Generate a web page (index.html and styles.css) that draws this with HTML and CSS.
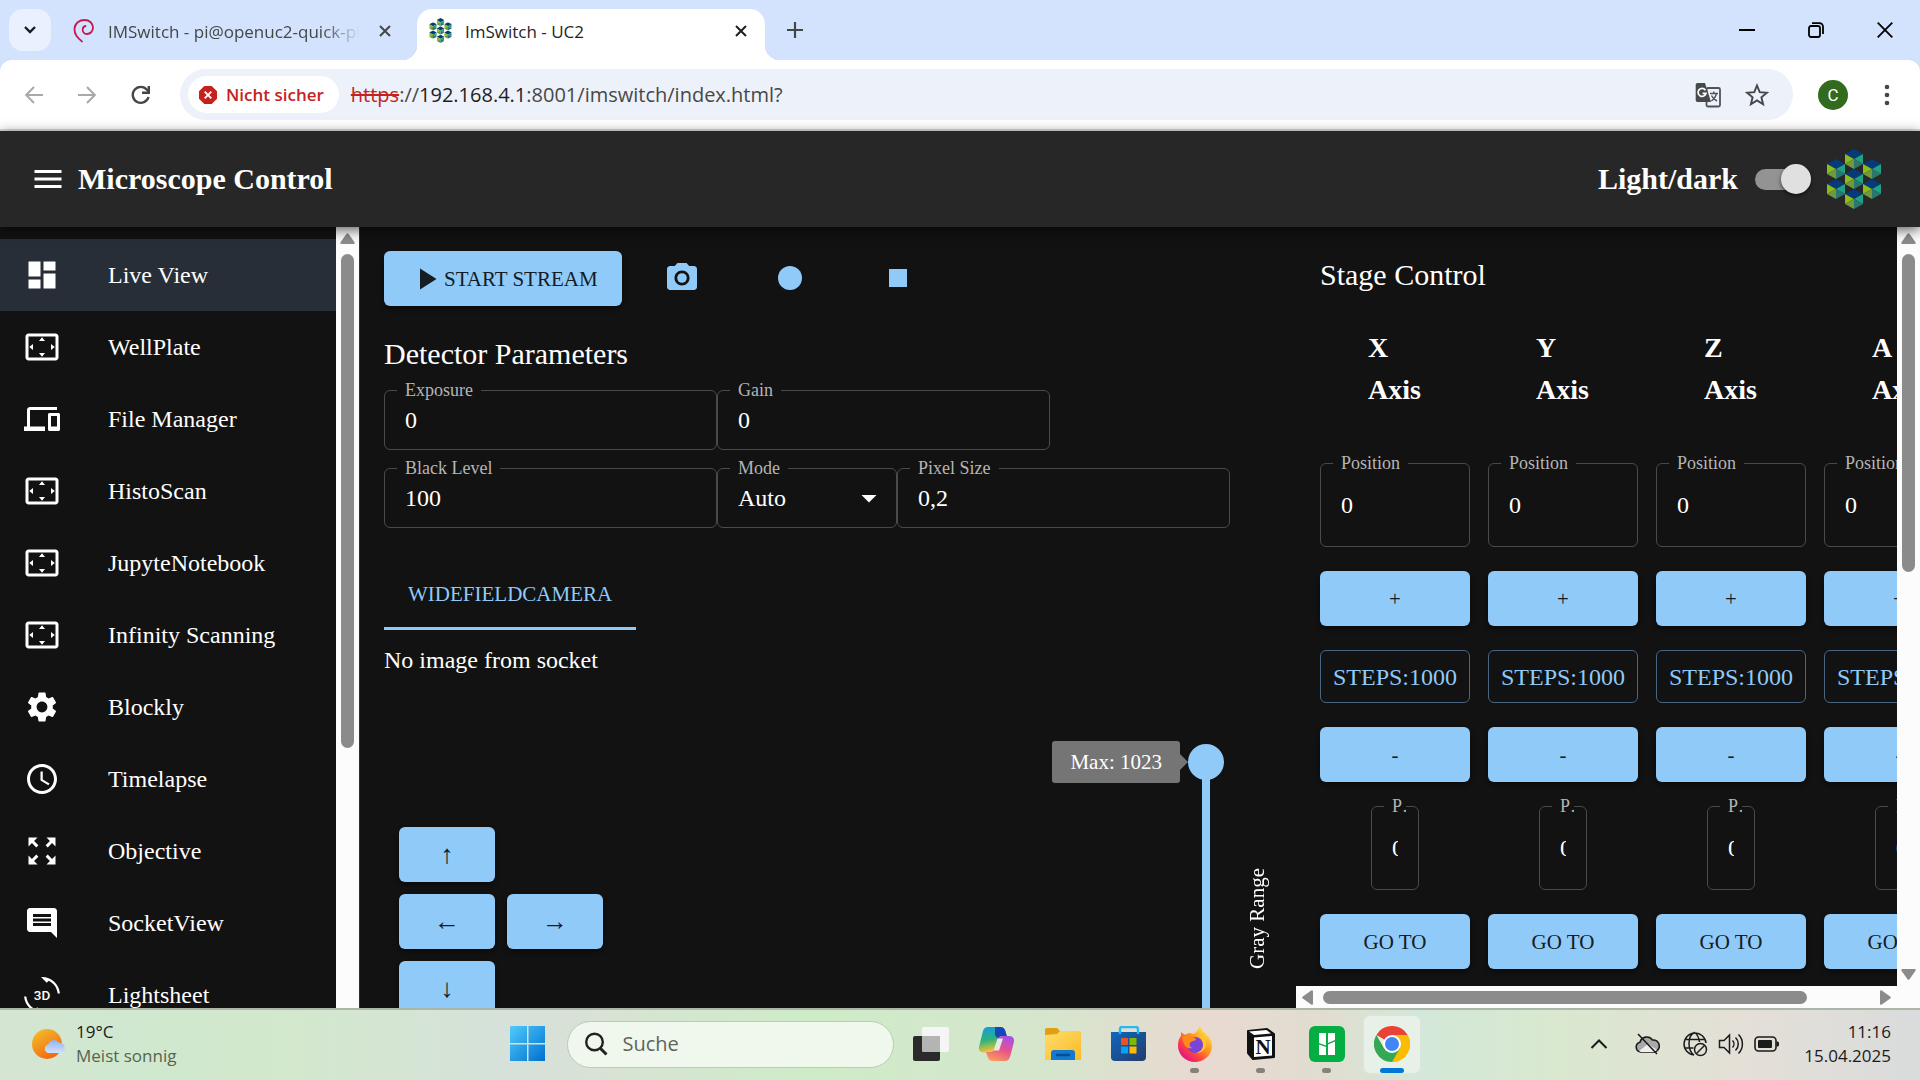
FILE: index.html
```html
<!DOCTYPE html>
<html lang="de">
<head>
<meta charset="utf-8">
<title>ImSwitch - UC2</title>
<link rel="stylesheet" href="styles.css">
</head>
<body>
<svg class="defs" aria-hidden="true">
  <defs>
    <symbol id="cube" viewBox="0 0 18 20">
      <path fill="#063a78" d="M9 0l9 5-9 5-9-5z"/>
      <path fill="#8cbb1c" d="M0 5l9 5-9 5z"/>
      <path fill="#70993f" d="M9 10v10l-9-5z"/>
      <path fill="#20a085" d="M18 5v10l-9-5z"/>
      <path fill="#2a776d" d="M9 10l9 5-9 5z"/>
    </symbol>
    <symbol id="uc2" viewBox="0 0 54 60">
      <use href="#cube" x="18" y="0" width="18" height="20"/>
      <use href="#cube" x="0" y="10" width="18" height="20"/>
      <use href="#cube" x="36" y="10" width="18" height="20"/>
      <use href="#cube" x="18" y="20" width="18" height="20"/>
      <use href="#cube" x="0" y="30" width="18" height="20"/>
      <use href="#cube" x="36" y="30" width="18" height="20"/>
      <use href="#cube" x="18" y="40" width="18" height="20"/>
    </symbol>
    <symbol id="overscan" viewBox="0 0 24 24">
      <path d="M12.01 5.5L10 8h4l-1.99-2.5zM18 10v4l2.5-1.99L18 10zM6 10l-2.5 2.01L6 14v-4zm8 6h-4l2.01 2.5L14 16zm7-13H3c-1.1 0-2 .9-2 2v14c0 1.1.9 2 2 2h18c1.1 0 2-.9 2-2V5c0-1.1-.9-2-2-2zm0 16.01H3V4.99h18v14.02z"/>
    </symbol>
    <symbol id="cross" viewBox="0 0 12 12">
      <path d="M1 1l10 10M11 1L1 11" fill="none" stroke="currentColor" stroke-width="2"/>
    </symbol>
    <symbol id="arrow" viewBox="0 0 15 11">
      <path d="M6.500 .8q1-1.200 2 0l6 8.400q.8 1.600-1 1.800h-12q-1.800-.2-1-1.800z" fill="#8b8b8b"/>
    </symbol>
  </defs>
</svg>

<header class="browser">
  <div class="tabstrip">
    <button class="tab-search" aria-label="Tabs durchsuchen"><svg width="12" height="8" viewBox="0 0 12 8"><path d="M1 1l5 5 5-5" fill="none" stroke="#1b1b1b" stroke-width="2.400"/></svg></button>
    <div class="tab">
      <svg width="22" height="24" viewBox="0 0 22 24"><path d="M9.500 23C5 19 1 15.500 1.500 9.500 2 4 6.500 1 11.500 1c5 0 8.500 3.500 8.500 7.500s-2.800 6.500-6 6.500-4.500-2.500-4.300-4.700c.2-2 1.600-3.300 3.500-3.300" fill="none" stroke="#c4194f" stroke-width="1.800"/></svg>
      <span class="tab-title faded">IMSwitch - pi@openuc2-quick-pi</span>
      <button class="icon-btn" aria-label="Tab schließen"><svg width="12" height="12"><use href="#cross"/></svg></button>
    </div>
    <div class="tab active">
      <svg width="23" height="25"><use href="#uc2"/></svg>
      <span class="tab-title">ImSwitch - UC2</span>
      <button class="icon-btn" aria-label="Tab schließen"><svg width="12" height="12"><use href="#cross"/></svg></button>
    </div>
    <button class="icon-btn new-tab" aria-label="Neuer Tab"><svg width="16" height="16" viewBox="0 0 16 16"><path d="M8 0v16M0 8h16" stroke="#444746" stroke-width="2.200"/></svg></button>
    <div class="window-controls">
      <button class="icon-btn" aria-label="Minimieren"><svg width="16" height="16" viewBox="0 0 16 16"><path d="M0 8h16" stroke="#000" stroke-width="2"/></svg></button>
      <button class="icon-btn" aria-label="Verkleinern"><svg width="16" height="16" viewBox="0 0 16 16" fill="none" stroke="#000" stroke-width="1.800"><rect x="1" y="4" width="11" height="11" rx="2"/><path d="M4 1.200h7.500a3.500 3.500 0 0 1 3.500 3.500v7.300"/></svg></button>
      <button class="icon-btn" aria-label="Schließen"><svg width="16" height="16" viewBox="0 0 16 16"><path d="M.7.7l14.600 14.600M15.300.7L.7 15.300" stroke="#000" stroke-width="1.800"/></svg></button>
    </div>
  </div>
  <div class="toolbar">
    <button class="icon-btn" aria-label="Zurück"><svg width="18" height="18" viewBox="0 0 18 18" fill="none" stroke="#a9a9a9" stroke-width="2"><path d="M18 9H1.500M9 1L1.200 9 9 17"/></svg></button>
    <button class="icon-btn" aria-label="Vorwärts"><svg width="18" height="18" viewBox="0 0 18 18" fill="none" stroke="#a9a9a9" stroke-width="2"><path d="M0 9h16.500M9 1l7.800 8L9 17"/></svg></button>
    <button class="icon-btn" aria-label="Neu laden"><svg width="20" height="20" viewBox="0 0 20 20"><path d="M17.500 12A8 8 0 1 1 16 4.800L18 7" fill="none" stroke="#444746" stroke-width="2.400"/><path d="M19 1v8h-8V6.600h5.600V1z" fill="#444746"/></svg></button>
    <div class="address">
      <button class="chip"><svg width="18" height="18" viewBox="0 0 18 18"><path d="M5.300 0h7.400L18 5.300v7.400L12.700 18H5.300L0 12.700V5.300z" fill="#c5221f"/><path d="M5.700 5.700l6.600 6.600M12.300 5.700l-6.600 6.600" stroke="#fff" stroke-width="1.800"/></svg>Nicht sicher</button>
      <div class="url"><s>https</s>://<b>192.168.4.1</b>:8001/imswitch/index.html?</div>
      <button class="icon-btn" aria-label="Übersetzen"><svg width="26" height="26" viewBox="0 0 26 26"><rect x="11.500" y="6" width="13.500" height="18.500" rx="1.500" fill="none" stroke="#525355" stroke-width="1.800"/><path d="M2.500 1H10l6 19H2.500A1.800 1.800 0 0 1 .7 18.200V2.800A1.800 1.800 0 0 1 2.500 1z" fill="#47494b"/><path d="M10.500 8.300A4 4 0 1 0 11 11.300H7.500" fill="none" stroke="#fff" stroke-width="1.700"/><path d="M15 11.500h8M18.800 9.500v2M21.500 11.500c-.8 3.500-3 6-5.200 7.500M16.500 13.500c1 2.300 3.200 4.400 5.500 5.500" fill="none" stroke="#525355" stroke-width="1.400"/></svg></button>
      <button class="icon-btn" aria-label="Lesezeichen"><svg width="24" height="24" viewBox="0 0 24 24"><path d="M12 2.500l2.700 6.700 7.200.5-5.500 4.600 1.700 7L12 17.400l-6.100 3.900 1.700-7L2.100 9.700l7.200-.5z" fill="none" stroke="#444746" stroke-width="1.900"/></svg></button>
    </div>
    <button class="avatar">C</button>
    <button class="icon-btn" aria-label="Menü"><svg width="6" height="22" viewBox="0 0 6 22" fill="#444746"><circle cx="3" cy="3" r="2.300"/><circle cx="3" cy="11" r="2.300"/><circle cx="3" cy="19" r="2.300"/></svg></button>
  </div>
</header>

<div class="appbar">
  <button class="icon-btn" aria-label="Open menu"><svg width="36" height="36" viewBox="0 0 24 24" fill="#fff"><path d="M3 18h18v-2H3v2zm0-5h18v-2H3v2zm0-7v2h18V6H3z"/></svg></button>
  <h1>Microscope Control</h1>
  <label for="theme">Light/dark</label>
  <input type="checkbox" id="theme" class="switch" checked>
  <svg width="54" height="60"><use href="#uc2"/></svg>
</div>

<div class="content">
  <nav class="sidebar">
    <ul>
      <li><a href="#live" class="selected"><svg viewBox="0 0 24 24"><path d="M3 13h8V3H3v10zm0 8h8v-6H3v6zm10 0h8V11h-8v10zm0-18v6h8V3h-8z"/></svg>Live View</a></li>
      <li><a href="#wellplate"><svg><use href="#overscan"/></svg>WellPlate</a></li>
      <li><a href="#files"><svg viewBox="0 0 24 24"><path d="M4 6h18V4H4c-1.100 0-2 .9-2 2v11H0v3h14v-3H4V6zm19 2h-6c-.55 0-1 .45-1 1v10c0 .55.45 1 1 1h6c.55 0 1-.45 1-1V9c0-.55-.45-1-1-1zm-1 9h-4v-7h4v7z"/></svg>File Manager</a></li>
      <li><a href="#histo"><svg><use href="#overscan"/></svg>HistoScan</a></li>
      <li><a href="#jupyter"><svg><use href="#overscan"/></svg>JupyteNotebook</a></li>
      <li><a href="#infinity"><svg><use href="#overscan"/></svg>Infinity Scanning</a></li>
      <li><a href="#blockly"><svg viewBox="0 0 24 24"><path d="M19.14 12.94c.04-.3.06-.61.06-.94 0-.32-.02-.64-.07-.94l2.03-1.580c.18-.14.23-.41.12-.61l-1.920-3.320c-.12-.22-.37-.29-.59-.22l-2.390.96c-.5-.38-1.030-.7-1.620-.94l-.36-2.540c-.04-.24-.24-.41-.48-.41h-3.840c-.24 0-.43.17-.47.41l-.36 2.540c-.59.24-1.130.57-1.620.94l-2.390-.96c-.22-.08-.47 0-.59.22L2.740 8.870c-.12.21-.08.47.12.61l2.030 1.580c-.05.3-.09.63-.09.94s.02.64.07.94l-2.030 1.580c-.18.14-.23.41-.12.61l1.920 3.320c.12.22.37.29.59.22l2.390-.96c.5.38 1.030.7 1.620.94l.36 2.540c.05.24.24.41.48.41h3.840c.24 0 .44-.17.47-.41l.36-2.540c.59-.24 1.130-.56 1.620-.94l2.390.96c.22.08.47 0 .59-.22l1.920-3.320c.12-.22.07-.47-.12-.61l-2.010-1.580zM12 15.600c-1.980 0-3.600-1.620-3.600-3.600s1.620-3.600 3.600-3.600 3.600 1.620 3.600 3.600-1.620 3.600-3.600 3.600z"/></svg>Blockly</a></li>
      <li><a href="#timelapse"><svg viewBox="0 0 24 24"><path d="M11.990 2C6.470 2 2 6.480 2 12s4.470 10 9.990 10C17.520 22 22 17.520 22 12S17.520 2 11.990 2zM12 20c-4.420 0-8-3.580-8-8s3.580-8 8-8 8 3.580 8 8-3.580 8-8 8zm.5-13H11v6l5.250 3.150.75-1.230-4.500-2.670z"/></svg>Timelapse</a></li>
      <li><a href="#objective"><svg viewBox="0 0 24 24"><path d="M15 3l2.300 2.300-2.890 2.870 1.420 1.420L18.700 6.700 21 9V3zM3 9l2.300-2.300 2.870 2.890 1.420-1.420L6.700 5.300 9 3H3zm6 12l-2.300-2.300 2.890-2.870-1.420-1.420L5.300 17.300 3 15v6zm12-6l-2.300 2.300-2.870-2.890-1.420 1.420 2.890 2.870L15 21h6z"/></svg>Objective</a></li>
      <li><a href="#socket"><svg viewBox="0 0 24 24"><path d="M21.990 4c0-1.100-.89-2-1.990-2H4c-1.100 0-2 .9-2 2v12c0 1.100.9 2 2 2h14l4 4-.01-18zM18 14H6v-2h12v2zm0-3H6V9h12v2zm0-3H6V6h12v2z"/></svg>SocketView</a></li>
      <li><a href="#lightsheet"><svg viewBox="0 0 24 24"><path d="M7.520 21.480C4.250 19.940 1.910 16.760 1.550 13H.05C.56 19.160 5.710 24 12 24l.66-.03-3.810-3.810-1.330 1.320zM16.480 2.520c3.270 1.550 5.610 4.720 5.970 8.480h1.500C23.440 4.840 18.290 0 12 0l-.66.03 3.810 3.810 1.330-1.320z"/><text class="icon-text" x="12" y="15.300" text-anchor="middle">3D</text></svg>Lightsheet</a></li>
    </ul>
    <div class="scroll-y" aria-hidden="true"><svg class="up"><use href="#arrow"/></svg><i class="thumb-nav"></i></div>
  </nav>

  <main class="live">
    <div class="actions">
      <button class="btn start"><svg width="36" height="36" viewBox="0 0 24 24"><path d="M8 5v14l11-7z" fill="#141c24"/></svg>START STREAM</button>
      <button class="btn-plain" aria-label="Snapshot"><svg width="36" height="36" viewBox="0 0 24 24"><circle cx="12" cy="12" r="3.200"/><path d="M9 2L7.170 4H4c-1.100 0-2 .9-2 2v12c0 1.100.9 2 2 2h16c1.100 0 2-.9 2-2V6c0-1.100-.9-2-2-2h-3.170L15 2H9zm3 15c-2.760 0-5-2.240-5-5s2.240-5 5-5 5 2.240 5 5-2.240 5-5 5z"/></svg></button>
      <button class="btn-plain" aria-label="Record"><svg width="36" height="36" viewBox="0 0 24 24"><circle cx="12" cy="12" r="8"/></svg></button>
      <button class="btn-plain" aria-label="Stop"><svg width="36" height="36" viewBox="0 0 24 24"><path d="M6 6h12v12H6z"/></svg></button>
    </div>
    <h2 class="params-title">Detector Parameters</h2>
    <div class="params">
      <div class="param-row">
        <div class="field"><label for="exposure">Exposure</label><input id="exposure" value="0"></div>
        <div class="field"><label for="gain">Gain</label><input id="gain" value="0"></div>
      </div>
      <div class="param-row">
        <div class="field"><label for="black">Black Level</label><input id="black" value="100"></div>
        <div class="field mode"><label for="mode">Mode</label><select id="mode"><option>Auto</option><option>Manual</option></select><svg width="36" height="36" viewBox="0 0 24 24"><path d="M7 10l5 5 5-5z" fill="#fff"/></svg></div>
        <div class="field"><label for="pixel">Pixel Size</label><input id="pixel" value="0,2"></div>
      </div>
    </div>
    <div class="tabs" role="tablist"><button role="tab" aria-selected="true">WIDEFIELDCAMERA</button></div>
    <p class="status">No image from socket</p>
    <div class="viewer">
      <div class="pad">
        <button class="btn up-btn">↑</button>
        <button class="btn left-btn">←</button>
        <button class="btn right-btn">→</button>
        <button class="btn down-btn">↓</button>
      </div>
      <div class="range">
        <output class="bubble" for="gray">Max: 1023</output>
        <input type="range" id="gray" min="0" max="1023" value="1023">
        <label for="gray">Gray Range</label>
      </div>
    </div>
  </main>

  <div class="side">
    <section class="stage">
      <div class="stage-body">
        <h2>Stage Control</h2>
        <div class="axes">
          <div class="axis">
            <h3>X Axis</h3>
            <div class="field"><label for="px">Position</label><input id="px" value="0"></div>
            <button class="btn">+</button><button class="btn-outline">STEPS:1000</button><button class="btn">-</button>
            <div class="field tiny"><label for="gx">Position</label><input id="gx" value="0"></div>
            <button class="btn">GO TO</button>
          </div>
          <div class="axis">
            <h3>Y Axis</h3>
            <div class="field"><label for="py">Position</label><input id="py" value="0"></div>
            <button class="btn">+</button><button class="btn-outline">STEPS:1000</button><button class="btn">-</button>
            <div class="field tiny"><label for="gy">Position</label><input id="gy" value="0"></div>
            <button class="btn">GO TO</button>
          </div>
          <div class="axis">
            <h3>Z Axis</h3>
            <div class="field"><label for="pz">Position</label><input id="pz" value="0"></div>
            <button class="btn">+</button><button class="btn-outline">STEPS:1000</button><button class="btn">-</button>
            <div class="field tiny"><label for="gz">Position</label><input id="gz" value="0"></div>
            <button class="btn">GO TO</button>
          </div>
          <div class="axis">
            <h3>A Axis</h3>
            <div class="field"><label for="pa">Position</label><input id="pa" value="0"></div>
            <button class="btn">+</button><button class="btn-outline">STEPS:1000</button><button class="btn">-</button>
            <div class="field tiny"><label for="ga">Position</label><input id="ga" value="0"></div>
            <button class="btn">GO TO</button>
          </div>
        </div>
      </div>
      <div class="scroll-x" aria-hidden="true"><svg class="left"><use href="#arrow"/></svg><i class="thumb-x"></i><svg class="right"><use href="#arrow"/></svg></div>
    </section>
    <div class="scroll-y page-scroll" aria-hidden="true"><svg class="up"><use href="#arrow"/></svg><i class="thumb-page"></i><svg class="down"><use href="#arrow"/></svg></div>
  </div>
</div>

<footer class="taskbar">
  <div class="weather">
    <svg width="36" height="34" viewBox="0 0 36 34"><defs><linearGradient id="sun" x1="0" y1="0" x2=".6" y2="1"><stop offset="0" stop-color="#f2c52f"/><stop offset="1" stop-color="#f26a0f"/></linearGradient><linearGradient id="cl" x1="0" y1="0" x2="0" y2="1"><stop offset="0" stop-color="#8fb4f0"/><stop offset="1" stop-color="#d3e2fb"/></linearGradient></defs><circle cx="16" cy="17" r="15" fill="url(#sun)"/><path d="M17 26a4.500 4.500 0 0 1 .3-8.700 6 6 0 0 1 10.700-1.500 4.600 4.600 0 0 1 5.600 4.500A4.200 4.200 0 0 1 30 26z" fill="url(#cl)"/></svg>
    <div><p>19°C</p><p class="muted">Meist sonnig</p></div>
  </div>
  <div class="dock">
    <button class="dock-item start-menu" aria-label="Start"><svg width="36" height="36" viewBox="0 0 36 36"><defs><linearGradient id="win" x1="0" y1="0" x2="1" y2="1"><stop offset="0" stop-color="#4fcbfb"/><stop offset="1" stop-color="#0070d0"/></linearGradient></defs><path fill="url(#win)" d="M1 0h16v17H0V1zM18.500 0H35v17H18.500zM0 18.500h17V35H0zM18.500 18.500H35V35H18.500z"/></svg></button>
    <label class="search"><svg width="24" height="24" viewBox="0 0 24 24" fill="none" stroke="#222"><circle cx="10.500" cy="10" r="8.300" stroke-width="2.400"/><path d="M16.500 16.500l6 6" stroke-width="3"/></svg><input type="search" placeholder="Suche" aria-label="Suche"></label>
    <button class="dock-item" aria-label="Aufgabenansicht"><svg width="36" height="36" viewBox="0 0 36 36"><rect x="0" y="10" width="27" height="25" rx="2" fill="#2a2a2a"/><rect x="9" y="1" width="27" height="25" rx="2" fill="#f5f5f5"/><path d="M9 10h18v16H11a2 2 0 0 1-2-2z" fill="#b4b4b4"/></svg></button>
    <button class="dock-item" aria-label="Copilot"><svg width="37" height="36" viewBox="0 0 37 36"><defs><linearGradient id="c1" x1="0" y1="0" x2=".2" y2="1"><stop offset="0" stop-color="#1597e8"/><stop offset=".55" stop-color="#2fb27b"/><stop offset="1" stop-color="#f5c431"/></linearGradient><linearGradient id="c2" x1=".7" y1="0" x2=".3" y2="1"><stop offset="0" stop-color="#a650e8"/><stop offset=".5" stop-color="#e8528c"/><stop offset="1" stop-color="#fb9a5a"/></linearGradient></defs><path d="M10 1h12c3 0 4.500 1.500 5.300 4l1.500 5h-5c-2 0-3 1-3.600 3l-3.500 10c-.7 2.200-1.800 3.500-4 3.500H6c-4.500 0-5.800-3-4.700-7L5 5c.8-2.500 2.500-4 5-4z" fill="url(#c1)"/><path d="M17 1h5c3 0 4.500 1.500 5.300 4l1.500 5h-5c-2 0-3 1-3.600 3L17 9z" fill="#1646b8"/><path d="M27 35H15c-3 0-4.500-1.500-5.300-4L8 26h4.700c2 0 3.200-1 4-3.500L20 13c.7-2.200 1.800-3 4-3h7c4.500 0 5.800 3.500 4.700 7L32 31c-.8 2.500-2.500 4-5 4z" fill="url(#c2)"/><path d="M15.500 24.500l4-12h5.500l-4 12z" fill="#e2ecdf"/></svg></button>
    <button class="dock-item" aria-label="Explorer"><svg width="36" height="36" viewBox="0 0 36 36"><defs><linearGradient id="fo" x1="0" y1="0" x2="1" y2="1"><stop offset="0" stop-color="#ffdc6b"/><stop offset="1" stop-color="#f9bb25"/></linearGradient></defs><path d="M0 4a2 2 0 0 1 2-2h10l4 4v6H0z" fill="#e0a010"/><path d="M0 9l12-1 3-3h19a2 2 0 0 1 2 2v27H0z" fill="url(#fo)"/><path d="M6 34V27a3 3 0 0 1 3-3h18a3 3 0 0 1 3 3v7z" fill="#1379cf"/><path d="M12 29h12" stroke="#0a4d92" stroke-width="2.400" stroke-linecap="round"/></svg></button>
    <button class="dock-item" aria-label="Microsoft Store"><svg width="36" height="36" viewBox="0 0 36 36"><defs><linearGradient id="ms" x1="0" y1="0" x2="1" y2="1"><stop offset="0" stop-color="#0e69bf"/><stop offset="1" stop-color="#253a6b"/></linearGradient></defs><path d="M0 6h35v25a4 4 0 0 1-4 4H4a4 4 0 0 1-4-4z" fill="url(#ms)"/><path d="M9 8V3a2 2 0 0 1 2-2h14a2 2 0 0 1 2 2v5" fill="none" stroke="#27b9f0" stroke-width="2.400"/><path fill="#f25022" d="M10 12h7v7h-7z"/><path fill="#7fba00" d="M18.500 12h7v7h-7z"/><path fill="#00a4ef" d="M10 20.500h7v7h-7z"/><path fill="#ffb900" d="M18.500 20.500h7v7h-7z"/></svg></button>
    <button class="dock-item open" aria-label="Firefox"><svg width="36" height="36" viewBox="0 0 36 36"><defs><linearGradient id="ff" x1=".9" y1=".1" x2=".2" y2=".9"><stop offset="0" stop-color="#fff04a"/><stop offset=".4" stop-color="#ff9a20"/><stop offset=".75" stop-color="#ff4040"/><stop offset="1" stop-color="#e31587"/></linearGradient></defs><path d="M23 0c1 4 4 6 7 9 3 3 5 6 5 11a17 16 0 0 1-34 0c0-5 1-8 3-10V6l4 3c1-1 3-2 5-2 2 0 3 1 3 1 3-1 5-4 7-8z" fill="url(#ff)"/><circle cx="18" cy="19" r="8" fill="#7a44dc"/><path d="M5 12c3-3 7-3 9-1 3 0 5 1 5 3-2 1-5 1-6 3-1 2 0 4 2 5-4 1-7-1-8-4z" fill="#ff8a1c"/><path d="M17 9c5 0 8 3 9 8 1 6-3 9-7 10 8 0 11-6 10-12-1-4-6-7-12-6z" fill="#ffc52e"/></svg></button>
    <button class="dock-item open" aria-label="Notion"><svg width="30" height="32" viewBox="0 0 30 32"><path d="M2 3l19-2 7 5v23l-21 2-5-6z" fill="#111" stroke="#111" stroke-width="2" stroke-linejoin="round"/><path d="M3 3.500l17.500-1.500L25 5.500 8 7z" fill="#fff"/><path d="M8 9.500l18-1.500v19.500L8 29z" fill="#fff"/><text class="notion-n" x="17" y="25.500" text-anchor="middle">N</text></svg></button>
    <button class="dock-item open" aria-label="Bambu"><svg width="36" height="36" viewBox="0 0 36 36"><rect width="36" height="36" rx="6" fill="#04ae42"/><path fill="#fff" d="M10 7h7v12.500L10 17zM10 18.500l7 2.500v8h-7zM19 7h7v7l-7 3zM19 18.500l7-3V29h-7z"/></svg></button>
    <button class="dock-item current" aria-label="Chrome"><svg width="36" height="36" viewBox="0 0 36 36"><path d="M18 18L2.400 9A18 18 0 0 1 33.600 9z" fill="#ea4335"/><path d="M18 18L33.600 9A18 18 0 0 1 18 36z" fill="#fbbc04"/><path d="M18 9h15.600A18 18 0 0 1 18 36l7.800-13.500z" fill="#fbbc04"/><path d="M2.400 9A18 18 0 0 0 18 36l7.800-13.500L10.200 22.500z" fill="#34a853"/><circle cx="18" cy="18" r="9" fill="#fff"/><circle cx="18" cy="18" r="7" fill="#4285f4"/></svg></button>
  </div>
  <div class="tray">
    <svg class="chev" width="18" height="12" viewBox="0 0 18 12"><path d="M1.500 10L9 2.500l7.500 7.500" fill="none" stroke="#1b1b1b" stroke-width="2"/></svg>
    <svg class="cloud" width="26" height="24" viewBox="0 0 26 24"><path d="M6.500 20A5 5 0 0 1 6 10.200 7 7 0 0 1 18.500 8 6 6 0 0 1 20 20z" fill="#a9a9a9" stroke="#1b1b1b" stroke-width="1.600"/><path d="M5 19l9-7 9 6-3 2H7z" fill="#efefef"/><path d="M4 2l19 20" stroke="#1b1b1b" stroke-width="1.600"/></svg>
    <svg width="26" height="26" viewBox="0 0 26 26" fill="none" stroke="#1b1b1b" stroke-width="1.500"><path d="M12 24A11 11 0 1 1 24 12M12 24c-3-2-5-6.500-5-11.500S9 3 12.500 1.500C15.500 3.500 17 7 17.500 11M2.500 8.500h20M2.500 17h9"/><circle cx="18.500" cy="18.500" r="6"/><path d="M14.500 22.500l8-8"/></svg>
    <svg width="26" height="24" viewBox="0 0 26 24" fill="none" stroke="#1b1b1b" stroke-width="1.500"><path d="M1.500 8.500H6L11.500 3v18L6 15.500H1.500zM14.500 8.500a5 5 0 0 1 0 7M17.500 5.500a9 9 0 0 1 0 13M20.500 2.500a13.500 13.500 0 0 1 0 19"/></svg>
    <svg width="26" height="18" viewBox="0 0 26 18"><rect x="1" y="2" width="21" height="14" rx="3.500" fill="none" stroke="#1b1b1b" stroke-width="1.600"/><rect x="4" y="5" width="14" height="8" rx="1" fill="#1b1b1b"/><path d="M22.500 6.500h1a1.500 1.500 0 0 1 1.500 1.500v2a1.500 1.500 0 0 1-1.500 1.500h-1z" fill="#1b1b1b"/></svg>
    <div class="clock"><p>11:16</p><p>15.04.2025</p></div>
  </div>
</footer>
</body>
</html>
```
FILE: styles.css
```css
* { box-sizing: border-box; }

body {
  margin: 0;
  height: 100vh;
  display: flex;
  flex-direction: column;
  overflow: hidden;
  background: #121212;
  color: #fff;
  font: 24px/36px "Liberation Serif", "Times New Roman", serif;
}

button, input, select { font: inherit; color: inherit; margin: 0; padding: 0; border: 0; background: none; }
h1, h2, h3, p, ul { margin: 0; padding: 0; }
svg { display: block; flex: none; }
.defs { position: absolute; width: 0; height: 0; }
.icon-btn { display: flex; align-items: center; justify-content: center; flex: none; }

/* Browser frame */
.browser { flex: none; background: #d3e2fd; color: #1f1f1f; font: 17px/24px "Open Sans", "Noto Sans", sans-serif; }
.tabstrip { display: flex; height: 60px; padding: 9px 27px 0 9px; }
.tab-search { width: 42px; height: 42px; border-radius: 14px; background: #e9f0fe; display: flex; align-items: center; justify-content: center; }
.tab { display: flex; align-items: center; width: 348px; margin-left: 10px; padding: 0 18px 8px 12px; color: #444746; }
.tab-title { flex: 1; margin: 2px 19px 0 13px; overflow: hidden; white-space: nowrap; }
.faded { -webkit-mask-image: linear-gradient(90deg, #000 85%, transparent); mask-image: linear-gradient(90deg, #000 85%, transparent); }
.tab.active { position: relative; margin-left: 8px; background: #fff; color: #1f1f1f; border-radius: 15px 15px 0 0; }
.tab.active::before, .tab.active::after { content: ""; position: absolute; bottom: 0; width: 14px; height: 14px; }
.tab.active::before { right: 100%; background: radial-gradient(circle at 0 0, transparent 14px, #fff 14px); }
.tab.active::after { left: 100%; background: radial-gradient(circle at 100% 0, transparent 14px, #fff 14px); }
.new-tab { width: 60px; height: 42px; }
.window-controls { display: flex; gap: 53px; margin-left: auto; height: 42px; }
.toolbar { display: flex; align-items: center; gap: 35px; height: 71px; padding: 0 30px 0 25px; background: #fff; border-radius: 12px 12px 0 0; border-bottom: 2px solid #dedede; }
.address { flex: 1; display: flex; align-items: center; gap: 24px; height: 51px; margin: 0 -10px 0 -6px; padding: 0 24px 0 8px; border-radius: 26px; background: #ecf1fa; }
.chip { display: flex; align-items: center; gap: 9px; height: 37px; padding: 0 15px 0 11px; margin-right: -12px; border-radius: 19px; background: #fff; color: #c5221f; font-weight: 600; }
.url { flex: 1; font-size: 20px; color: #474747; }
.url s { color: #c5221f; }
.url b { font-weight: 400; color: #1f1f1f; }
.avatar { width: 30px; height: 30px; margin-right: 1px; border-radius: 50%; background: #326b1e; color: #fff; font: 17px/30px Roboto, sans-serif; }

/* Application header */
.appbar { position: relative; z-index: 1; flex: none; display: flex; align-items: center; height: 96px; padding: 0 39px 0 30px; background: #272727; box-shadow: 0 3px 12px #000000a0; font-size: 30px; font-weight: 700; }
.appbar h1 { margin: 0 auto 0 12px; font-size: inherit; }
.switch { appearance: none; position: relative; width: 51px; height: 21px; margin: 0 21px 0 17px; border-radius: 11px; background: #939393; }
.switch::before { content: ""; position: absolute; top: -5px; right: -5px; width: 30px; height: 30px; border-radius: 50%; background: #e0e0e0; box-shadow: 0 2px 4px #0008; }

.content { flex: 1; min-height: 0; display: grid; grid-template-columns: 360px minmax(0, 3fr) minmax(0, 2fr); grid-template-rows: minmax(0, 1fr); }

/* Navigation */
.sidebar { display: flex; border-right: 1px solid #2e2e2e; }
.sidebar ul { flex: 1; padding-top: 12px; list-style: none; }
.sidebar a { display: flex; align-items: center; gap: 48px; height: 72px; padding-left: 24px; color: #fff; text-decoration: none; }
.sidebar a.selected { background: #272e37; }
.sidebar a svg { width: 36px; height: 36px; fill: #fff; }
.icon-text { font: 500 9px Roboto, sans-serif; }

/* Scroll bars */
.scroll-y { flex: none; display: flex; flex-direction: column; align-items: center; width: 23px; padding: 6px 0; background: #fcfcfc; }
.scroll-y svg, .scroll-x svg { width: 15px; height: 11px; }
.scroll-y i, .scroll-x i { border-radius: 7px; background: #8b8b8b; }
.scroll-y i { width: 13px; margin-top: 10px; }
.thumb-nav { flex: 0 0 494px; }
.thumb-page { flex: 0 0 318px; }
.page-scroll { padding-bottom: 28px; }
.down { margin-top: auto; transform: rotate(180deg); }
.scroll-x { flex: none; display: flex; align-items: center; height: 22px; padding: 0 4px; background: #fcfcfc; }
.scroll-x i { flex: 0 0 484px; height: 13px; margin-left: 8px; }
.left { transform: rotate(-90deg); }
.right { margin-left: auto; transform: rotate(90deg); }

/* Shared controls */
.btn { height: 55px; border-radius: 6px; background: #90caf9; color: #141c24; font-size: 21px; box-shadow: 0 3px 5px #00000070; }
.btn-outline { height: 53px; border: 1px solid #4a6580; border-radius: 6px; color: #90caf9; white-space: nowrap; }
.btn-plain { display: flex; align-items: center; justify-content: center; width: 96px; height: 54px; fill: #90caf9; }
.field { position: relative; }
.field label { position: absolute; left: 13px; top: -10px; padding: 0 8px; background: #121212; color: #b5b5b5; font-size: 18px; line-height: 20px; }
.field input, .field select { display: block; width: 100%; height: 60px; padding: 0 20px; border: 1px solid #4a4a4a; border-radius: 6px; }
.field select { appearance: none; }
.field input:focus { outline: 0; }

/* Live view */
.live { padding: 24px; }
.live h2, .stage h2 { font-size: 30px; font-weight: 400; line-height: 48px; }
.actions { display: flex; gap: 12px; }
.start { display: flex; align-items: center; padding: 0 24px; white-space: nowrap; }
.params-title { margin: 24px 0 12px; }
.params { display: flex; flex-direction: column; gap: 18px; }
.param-row { display: flex; }
.param-row .field { flex: 0 1 333px; }
.param-row .mode { flex-basis: 180px; }
.mode svg { position: absolute; right: 10px; top: 12px; pointer-events: none; }
.tabs { margin-top: 30px; }
.tabs button { display: block; height: 72px; padding: 2px 24px 0; border-bottom: 3px solid #90caf9; color: #90caf9; font-size: 21px; }
.status { margin-top: 12px; }
.viewer { display: flex; align-items: flex-start; justify-content: space-between; margin-top: 63px; }
.pad { display: grid; grid-template-columns: 96px 96px; gap: 12px; margin: 86px 0 0 15px; }
.pad .btn { font-size: 26px; }
.up-btn { grid-area: 1 / 1; }
.left-btn { grid-area: 2 / 1; }
.right-btn { grid-area: 2 / 2; }
.down-btn { grid-area: 3 / 1; }
.range { display: flex; align-items: flex-start; }
.bubble { position: relative; padding: 0 18px; margin-right: 8px; border-radius: 3px; background: #757575; font-size: 21px; line-height: 42px; }
.bubble::after { content: ""; position: absolute; left: 100%; top: 13px; border: 8px solid transparent; border-left-color: #757575; border-right: 0; }
.range input { appearance: none; writing-mode: vertical-lr; direction: rtl; width: 36px; height: 352px; margin-top: 3px; }
.range input::-webkit-slider-runnable-track { width: 8px; border-radius: 4px; background: linear-gradient(transparent 18px, #90caf9 18px); }
.range input::-webkit-slider-thumb { appearance: none; width: 36px; height: 36px; margin-left: -14px; border-radius: 50%; background: #90caf9; }
.range label { margin: 0 3px 0 21px; writing-mode: vertical-rl; transform: rotate(180deg); align-self: center; font-size: 21px; line-height: 24px; }

/* Stage control */
.side { display: flex; }
.stage { flex: 1; min-width: 0; display: flex; flex-direction: column; }
.stage-body { flex: 1; min-height: 0; overflow: hidden; padding: 24px 0 0 24px; }
.axes { display: flex; gap: 18px; }
.axis { flex: 0 0 150px; display: flex; flex-direction: column; gap: 24px; }
.axis h3 { width: 102px; margin: 28px 0 28px auto; padding-right: 40px; font-size: 28px; line-height: 42px; }
.axis .field input { height: 84px; }
.tiny { width: 48px; align-self: center; }
.tiny label { width: 22px; padding: 0 0 0 8px; overflow: hidden; text-overflow: ellipsis; white-space: nowrap; }

/* Task bar */
.taskbar { position: relative; z-index: 1; flex: none; display: flex; align-items: center; height: 72px; padding-bottom: 2px; border-top: 2px solid #abb5a8; color: #1b1b1b; font: 17px/24px "Open Sans", "Noto Sans", sans-serif; background: linear-gradient(90deg, #d5e5d2 0, #cfe8cf 7%, #d3e8cd 15%, #d6e1da 27%, #d9e1d6 30%, #ceecc8 42%, #d6e5cd 55%, #e9d9d1 63%, #e0ddd0 69%, #d3e8d9 74%, #d9e8cf 81%, #e4dfd7 91%, #d9dcdc 100%); }
.weather { flex: 1; display: flex; align-items: center; gap: 9px; padding-left: 31px; }
.muted { color: #56644f; }
.dock { display: flex; align-items: center; padding-right: 8px; }
.dock-item { position: relative; display: flex; align-items: center; justify-content: center; width: 66px; height: 57px; }
.start-menu { margin-right: 6px; }
.search { display: flex; align-items: center; gap: 15px; width: 327px; height: 47px; margin-right: 4px; padding-left: 16px; border: 1px solid #b9cdb6; border-radius: 24px; background: #f0f8ee; }
.search input { flex: 1; min-width: 0; font-size: 20px; outline: 0; }
.search input::placeholder { color: #5d645c; opacity: 1; }
.open::after, .current::after { content: ""; position: absolute; bottom: 0; width: 9px; height: 5px; border-radius: 3px; background: #87817b; }
.current { width: 56px; margin-left: 4px; border-radius: 6px; background: #e8f1e8; box-shadow: 0 0 1px 1px #dbe6dc; }
.current::after { width: 24px; background: #0078d4; }
.notion-n { font: 700 21px "Liberation Serif", serif; fill: #111; }
.tray { flex: 1; display: flex; align-items: center; justify-content: flex-end; gap: 10px; padding-right: 29px; }
.chev { margin-right: 16px; }
.cloud { margin-right: 12px; }
.clock { margin-left: 14px; text-align: right; }
```
